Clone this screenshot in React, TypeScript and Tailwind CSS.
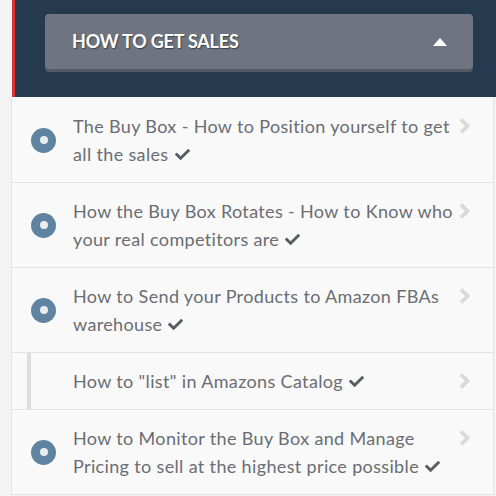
import React from "react";

const Check = () => (
  <svg viewBox="0 0 512 512" className="inline-block w-[15px] h-[15px] ml-[6px] align-[-1px] fill-[#595d63]">
    <path d="M173.9 439.4l-166.4-166.4c-10-10-10-26.2 0-36.2l36.2-36.2c10-10 26.2-10 36.2 0L192 312.7 432.1 72.6c10-10 26.2-10 36.2 0l36.2 36.2c10 10 10 26.2 0 36.2l-294.4 294.4c-10 10-26.2 10-36.2 0z" />
  </svg>
);

const Chevron = () => (
  <svg viewBox="0 0 11 16" className="w-[11px] h-[16px]">
    <path d="M2 1.5 L8.5 8 L2 14.5" fill="none" stroke="#d9d9d9" strokeWidth="3.8" strokeLinejoin="miter" />
  </svg>
);

const Dot = () => (
  <div className="w-[25px] h-[25px] rounded-full bg-[#5f84a2] flex items-center justify-center">
    <div className="w-[8px] h-[8px] rounded-full bg-[#e9edf0]" />
  </div>
);

type Item = { text: React.ReactNode; dot: boolean };

const items: Item[] = [
  { text: <>The Buy Box - How to Position yourself to get all the sales<Check /></>, dot: true },
  { text: <>How the Buy Box Rotates - How to Know who your real competitors are<Check /></>, dot: true },
  { text: <>How to Send your Products to Amazon FBAs warehouse<Check /></>, dot: true },
  { text: <>How to "list" in Amazons Catalog<Check /></>, dot: false },
  { text: <>How to Monitor the Buy Box and Manage Pricing to sell at the highest price possible<Check /></>, dot: true },
];

export default function App() {
  return (
    <div className="w-[496px] h-[496px] overflow-hidden bg-[#f3f3f3] flex flex-col" style={{ fontFamily: "Lato, 'Liberation Sans', sans-serif" }}>
      <div className="ml-[12px] h-[97px] shrink-0 bg-[#263a4f] border-l-[3px] border-[#d9342f] pt-[14px] pl-[30px] pr-[23px]">
        <div className="h-[55px] rounded-[4px] bg-[#6e7580] shadow-[0_3px_0_#555b64] flex items-center justify-between pl-[27px] pr-[26px]">
          <span className="text-white font-bold text-[18px] tracking-[-0.2px] [text-shadow:1px_1px_1px_#3d4249]">HOW TO GET SALES</span>
          <svg viewBox="0 0 14 8" className="w-[14px] h-[8px]">
            <path d="M0 8 L7 0 L14 8 Z" fill="#ffffff" />
          </svg>
        </div>
      </div>
      <div className="ml-[11px] w-[483px] bg-[#f9f9f9] border-l border-r border-t border-[#e3e3e3] border-t-[#fbfbfb] flex flex-col">
        {items.map((it, i) => (
          <div key={i} className="flex border-b border-[#e2e2e2]">
            <div className="w-[61px] shrink-0 flex items-center pl-[19px] relative">
              {it.dot ? <Dot /> : <div className="absolute left-[15px] top-0 bottom-0 w-[4px] bg-[#dedede]" />}
            </div>
            <div className="flex-1 py-[14px] text-[18px] leading-[28px] tracking-[0.35px] text-[#6a6d72] pr-[2px]">{it.text}</div>
            <div className="w-[36px] shrink-0 pt-[20px] pl-[2px]">
              <Chevron />
            </div>
          </div>
        ))}
      </div>
    </div>
  );
}
